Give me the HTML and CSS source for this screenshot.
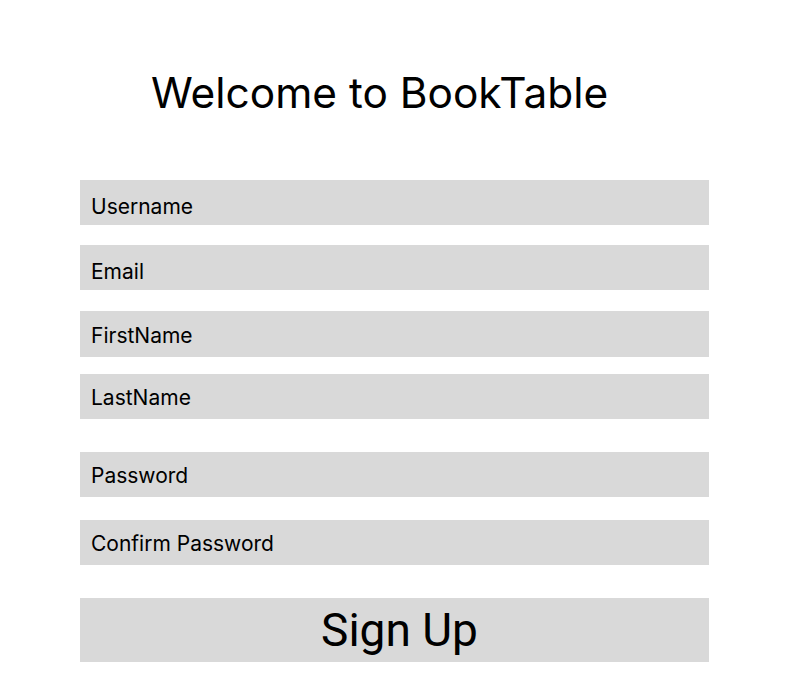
FILE: index.html
```html
<!DOCTYPE html>
<html>
<head>
<meta charset="utf-8">
<link rel="stylesheet" href="styles.css">
</head>
<body>
<main class="page">
  <h1 class="title">Welcome to BookTable</h1>
  <form class="form">
    <div class="field f-user">Username</div>
    <div class="field f-email">Email</div>
    <div class="field f-first">FirstName</div>
    <div class="field f-last">LastName</div>
    <div class="field f-pass">Password</div>
    <div class="field f-confirm">Confirm Password</div>
    <div class="button">Sign Up</div>
  </form>
</main>
</body>
</html>
```
FILE: styles.css
```css
html, body {
  margin: 0;
  padding: 0;
  background: #ffffff;
}
.page {
  width: 802px;
  height: 687px;
  font-family: Inter, "Noto Sans", sans-serif;
  color: #000;
}
.title {
  margin: 0;
  padding: 68px 0 0 151px;
  font-size: 42.4px;
  font-weight: 400;
  line-height: 50px;
}
.form {
  display: flex;
  flex-direction: column;
  margin: 62px 0 0 80px;
  width: 629px;
}
.field {
  height: 45px;
  background: #d9d9d9;
  box-sizing: border-box;
  padding-left: 11px;
  padding-top: 2px;
  display: flex;
  align-items: center;
  font-size: 21px;
}
.f-user { padding-top: 8px; }
.f-email { margin-top: 20px; padding-top: 8px; }
.f-first { margin-top: 21px; height: 46px; }
.f-last { margin-top: 17px; }
.f-pass { margin-top: 33px; }
.f-confirm { margin-top: 23px; }
.button {
  margin-top: 33px;
  height: 64px;
  box-sizing: border-box;
  padding-left: 10px;
  background: #d9d9d9;
  display: flex;
  align-items: center;
  justify-content: center;
  font-family: Roboto, sans-serif;
  font-size: 46px;
}
```
